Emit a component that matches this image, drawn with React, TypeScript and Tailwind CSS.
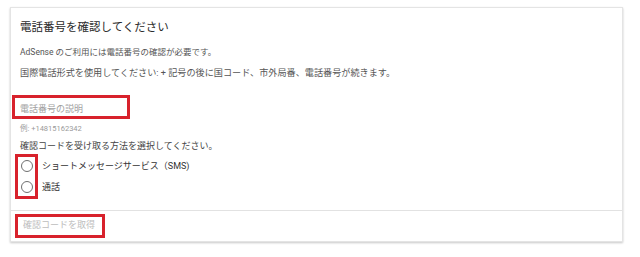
import React, { useState } from "react";

const font = { fontFamily: 'Roboto, "Noto Sans CJK JP", sans-serif' };

const Radio = ({ checked }: { checked: boolean }) => (
  <span className="flex h-[12px] w-[12px] items-center justify-center rounded-full border-[1.5px] border-[#6f6f6f]">
    {checked && <span className="h-[5px] w-[5px] rounded-full bg-[#4285f4]" />}
  </span>
);

const App = () => {
  const [method, setMethod] = useState("");
  const [phone, setPhone] = useState("");

  return (
    <div className="h-[257px] w-[640px] bg-white pl-[10px] pt-[7px]" style={font}>
      <div className="w-[613px] border border-[#e4e4e4] bg-white shadow-[0_1px_2px_rgba(0,0,0,0.22)]">
        <div className="flex flex-col pb-[11px] pl-[9px] pt-[11px]">
          <h1 className="text-[11.5px] leading-[16px] text-[#2b2b2b]">電話番号を確認してください</h1>
          <p className="mt-[11px] text-[8.5px] leading-[12px] text-[#555]">
            AdSense のご利用には電話番号の確認が必要です。
          </p>
          <p className="mt-[9px] text-[9.15px] leading-[12px] text-[#555]">
            国際電話形式を使用してください: + 記号の後に国コード、市外局番、電話番号が続きます。
          </p>

          <div className="-ml-[8px] mt-[16px] flex h-[24px] w-[118px] items-start border-[3px] border-[#d8222c] pl-[5px] pt-[5px]">
            <input
              value={phone}
              onChange={(e) => setPhone(e.target.value)}
              placeholder="電話番号の説明"
              className="w-full bg-transparent text-[9px] leading-[12px] text-[#555] outline-none placeholder:text-[#a0a0a0]"
            />
          </div>
          <p className="mt-[5px] text-[7.5px] leading-[10px] text-[#9a9a9a]">例: +14815162342</p>

          <p className="mt-[6px] text-[9px] leading-[12px] text-[#444]">
            確認コードを受け取る方法を選択してください。
          </p>

          <div className="mt-[2px] flex">
            <div className="-ml-[5px] flex h-[45px] w-[23px] flex-col items-center justify-center gap-[9px] border-[3px] border-[#d8222c]">
              <button onClick={() => setMethod("sms")}>
                <Radio checked={method === "sms"} />
              </button>
              <button onClick={() => setMethod("call")}>
                <Radio checked={method === "call"} />
              </button>
            </div>
            <div className="ml-[4px] flex h-[45px] flex-col justify-center gap-[9px] text-[9px] leading-[12px] text-[#333]">
              <span className="cursor-pointer" onClick={() => setMethod("sms")}>
                ショートメッセージサービス（SMS)
              </span>
              <span className="cursor-pointer" onClick={() => setMethod("call")}>
                通話
              </span>
            </div>
          </div>
        </div>

        <div className="border-t border-[#e2e2e2] pb-[3px] pl-[4px] pt-[3px]">
          <button
            disabled={!method || !phone}
            className="flex h-[24px] w-[90px] items-center border-[3px] border-[#d8222c] pl-[5px] text-[9px] text-[#bdbdbd]"
          >
            確認コードを取得
          </button>
        </div>
      </div>
    </div>
  );
};

export default App;
